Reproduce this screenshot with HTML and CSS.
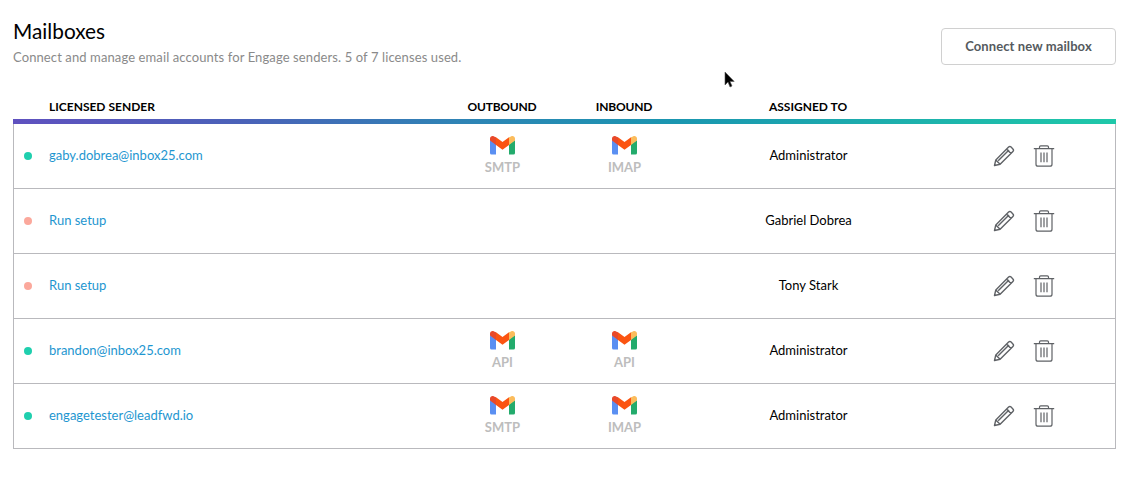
FILE: index.html
```html
<!DOCTYPE html>
<html lang="en">
<head>
<meta charset="utf-8">
<title>Mailboxes</title>
<link rel="stylesheet" href="styles.css">
</head>
<body>
<svg class="sprites" width="0" height="0" aria-hidden="true">
  <symbol id="gmail" viewBox="0 0 25 19">
    <path d="M0 4v13a1.600 1.600 0 0 0 1.600 1.600H6V8z" fill="#5a8ff2"/>
    <path d="M19 8v10.600h4.400A1.600 1.600 0 0 0 25 17V4z" fill="#23ab6c"/>
    <path d="M19 1.200V9l6-4.600V2.600c0-2-2.400-3.200-4-2z" fill="#fbbc5c"/>
    <path d="M6 9V1.200L12.500 6 19 1.200V9l-6.500 4.800z" fill="#fb5411"/>
    <path d="M0 2.600v1.800L6 9V1.200L4 .6C2.400-.6 0 .6 0 2.600z" fill="#e8492a"/>
  </symbol>
  <symbol id="pencil" viewBox="0 0 22 22">
    <path d="M1.500 20.500l1.300-5.600L15.600 2.100a1.800 1.800 0 0 1 2.500 0l1.800 1.800a1.800 1.800 0 0 1 0 2.500L7.100 19.200z M13.600 4.100l4.300 4.300 M2.800 14.900l4.300 4.300 M5.200 15.800L16 5" fill="none" stroke="currentColor" stroke-width="1.400" stroke-linejoin="round"/>
  </symbol>
  <symbol id="trash" viewBox="0 0 22 22">
    <path d="M.8 3.700h20.400 M6.500 3.700V2a1.200 1.200 0 0 1 1.200-1.200h6.600A1.200 1.200 0 0 1 15.500 2v1.700 M3 3.700v15.500a2 2 0 0 0 2 2h12a2 2 0 0 0 2-2V3.700 M8 7.500v9.700 M11 7.500v9.700 M14 7.500v9.700" fill="none" stroke="currentColor" stroke-width="1.200" stroke-linejoin="round"/>
  </symbol>
</svg>

<main class="page">
  <header class="top">
    <div>
      <h1 class="title">Mailboxes</h1>
      <p class="subtitle">Connect and manage email accounts for Engage senders. 5 of 7 licenses used.</p>
    </div>
    <button class="connect" type="button">Connect new mailbox</button>
  </header>

  <div class="row head">
    <div class="sender">Licensed sender</div>
    <div class="mid tight">Outbound</div>
    <div class="mid tight">Inbound</div>
    <div class="mid">Assigned to</div>
    <div></div>
  </div>
  <div class="bar"></div>

  <div class="table">
    <div class="row item">
      <div class="sender"><span class="dot ok"></span><a class="link">gaby.dobrea@inbox25.com</a></div>
      <div class="mid prov"><svg class="gm"><use href="#gmail"/></svg><span>SMTP</span></div>
      <div class="mid prov"><svg class="gm"><use href="#gmail"/></svg><span>IMAP</span></div>
      <div class="mid who">Administrator</div>
      <div class="acts"><svg class="ic"><use href="#pencil"/></svg><svg class="ic"><use href="#trash"/></svg></div>
    </div>
    <div class="row item">
      <div class="sender"><span class="dot warn"></span><a class="link">Run setup</a></div>
      <div class="mid"></div>
      <div class="mid"></div>
      <div class="mid who">Gabriel Dobrea</div>
      <div class="acts"><svg class="ic"><use href="#pencil"/></svg><svg class="ic"><use href="#trash"/></svg></div>
    </div>
    <div class="row item">
      <div class="sender"><span class="dot warn"></span><a class="link">Run setup</a></div>
      <div class="mid"></div>
      <div class="mid"></div>
      <div class="mid who">Tony Stark</div>
      <div class="acts"><svg class="ic"><use href="#pencil"/></svg><svg class="ic"><use href="#trash"/></svg></div>
    </div>
    <div class="row item">
      <div class="sender"><span class="dot ok"></span><a class="link">brandon@inbox25.com</a></div>
      <div class="mid prov"><svg class="gm"><use href="#gmail"/></svg><span>API</span></div>
      <div class="mid prov"><svg class="gm"><use href="#gmail"/></svg><span>API</span></div>
      <div class="mid who">Administrator</div>
      <div class="acts"><svg class="ic"><use href="#pencil"/></svg><svg class="ic"><use href="#trash"/></svg></div>
    </div>
    <div class="row item">
      <div class="sender"><span class="dot ok"></span><a class="link">engagetester@leadfwd.io</a></div>
      <div class="mid prov"><svg class="gm"><use href="#gmail"/></svg><span>SMTP</span></div>
      <div class="mid prov"><svg class="gm"><use href="#gmail"/></svg><span>IMAP</span></div>
      <div class="mid who">Administrator</div>
      <div class="acts"><svg class="ic"><use href="#pencil"/></svg><svg class="ic"><use href="#trash"/></svg></div>
    </div>
  </div>
</main>

<svg class="cursor" width="12" height="19" viewBox="0 0 12 19" aria-hidden="true">
  <path d="M1 1v13l3-3 2 5 2-1-2-4.600h4.200z" fill="#000" stroke="#555" stroke-width=".6"/>
</svg>
</body>
</html>
```

FILE: styles.css
```css
* { box-sizing: border-box; }
html, body { margin: 0; padding: 0; }
body {
  background: #fff;
  font-family: "Lato", "Liberation Sans", sans-serif;
  color: #000;
  width: 1137px;
  height: 478px;
  overflow: hidden;
  position: relative;
}
.sprites { position: absolute; }
.page { padding: 19px 21px 0 13px; }
.top {
  display: flex;
  justify-content: space-between;
  align-items: flex-start;
  height: 79px;
}
.title {
  margin: 0;
  font-size: 20.8px;
  font-weight: 400;
  line-height: 24px;
}
.subtitle {
  margin: 4px 0 0;
  font-size: 13px;
  line-height: 20px;
  color: #8a8a8a;
  letter-spacing: 0.107px;
}
.connect {
  margin-top: 9px;
  width: 175px;
  height: 37px;
  background: #fff;
  border: 1px solid #d0d0d0;
  border-radius: 4px;
  font: 700 13px "Lato", "Liberation Sans", sans-serif;
  letter-spacing: 0.1px;
  color: #555a5e;
  padding: 0 0 2px;
}
.row {
  display: grid;
  grid-template-columns: 435px 108px 136px 232px 1fr;
  align-items: center;
}
.head {
  height: 21px;
  font-size: 12px;
  font-weight: 700;
  text-transform: uppercase;
  align-items: start;
  line-height: 18px;
}
.head .sender { padding-left: 36px; }
.tight { letter-spacing: -0.2px; }
.bar {
  height: 5px;
  background: linear-gradient(90deg, #5f51bf 0%, #4a62b8 21%, #2f83b5 40%, #1a96b0 60%, #1fc8a9 100%);
}
.table {
  border: 1px solid #b9b9bd;
  border-top: 0;
}
.item {
  height: 65px;
  border-bottom: 1px solid #b9b9bd;
  font-size: 13px;
  grid-template-columns: 434.5px 108px 136px 232px 1fr;
}
.item:last-child { border-bottom: 0; height: 64px; }
.sender { display: flex; align-items: center; }
.item .sender { padding: 0 0 2px 10px; }
.dot {
  width: 8px;
  height: 8px;
  border-radius: 50%;
  margin: 2px 17px 0 0;
}
.ok { background: #1fcfae; }
.warn { background: #fba89c; }
.link { color: #1e96d0; }
.mid { text-align: center; }
.prov {
  display: flex;
  flex-direction: column;
  align-items: center;
  padding-bottom: 2px;
  font-size: 13px;
  font-weight: 700;
  color: #bdbdbd;
  line-height: 14px;
}
.gm { width: 25px; height: 19px; margin-bottom: 5px; }
.who { color: #000; padding-bottom: 2px; }
.acts {
  display: flex;
  align-items: center;
  gap: 18px;
  padding: 0 0 1px 68.5px;
  color: #5f6266;
}
.ic { width: 22px; height: 22px; }
.cursor {
  position: absolute;
  left: 724px;
  top: 71px;
}
```
